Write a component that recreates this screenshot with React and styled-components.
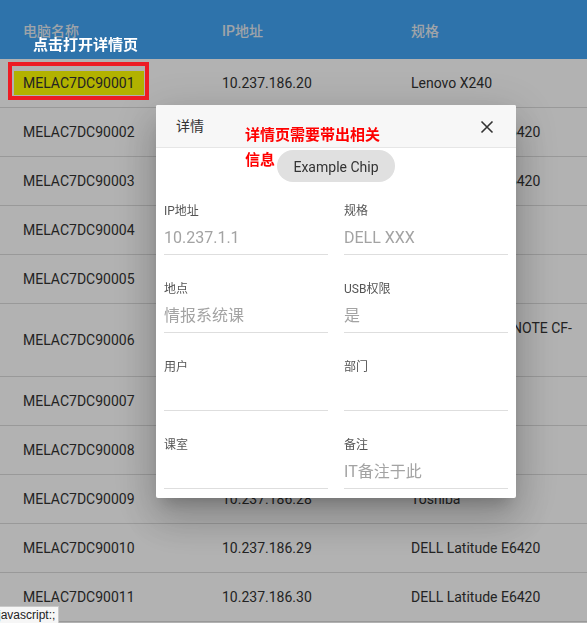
import React from "react";
import styled, { createGlobalStyle } from "styled-components";

const GlobalStyle = createGlobalStyle`
  html, body {
    margin: 0;
    padding: 0;
    background: #ffffff;
    overflow: hidden;
  }
  body {
    font-family: Roboto, "Noto Sans CJK SC", sans-serif;
    color: #333333;
  }
`;

const Page = styled.div`
  position: relative;
  width: 587px;
  height: 623px;
  overflow: hidden;
`;

const Table = styled.div`
  width: 100%;
  font-size: 14px;
`;

const HeadRow = styled.div`
  display: grid;
  grid-template-columns: 199px 189px 1fr;
  height: 59px;
  align-items: center;
  background: #42a5f5;
`;

const HeadCell = styled.div`
  padding: 0 0 0 23px;
  color: #e4ebf2;
  font-weight: 500;
  font-size: 14px;
`;

const Row = styled.div`
  display: grid;
  grid-template-columns: 199px 189px 1fr;
  align-items: center;
  border-bottom: 1px solid #dcdcdc;
  background: #ffffff;
`;

const Cell = styled.div`
  padding: 12px 0 12px 23px;
  line-height: 24px;
  color: #333333;
  white-space: ${(p) => (p.$multi ? "pre" : "nowrap")};
`;

const Marker = styled.span`
  background: #ffff00;
  padding: 4px 9px;
  margin-left: -9px;
`;

const Overlay = styled.div`
  position: fixed;
  inset: 0;
  background: rgba(0, 0, 0, 0.3);
`;

const Dialog = styled.div`
  position: fixed;
  left: 156px;
  top: 105px;
  width: 360px;
  background: #ffffff;
  border-radius: 2px;
  box-shadow: 0 11px 15px -7px rgba(0, 0, 0, 0.2),
    0 24px 38px 3px rgba(0, 0, 0, 0.14), 0 9px 46px 8px rgba(0, 0, 0, 0.12);
  overflow: hidden;
`;

const DialogHeader = styled.div`
  display: flex;
  align-items: center;
  justify-content: space-between;
  height: 42px;
  padding: 0 18px 0 20px;
  background: #f7f7f7;
  border-bottom: 1px solid #e6e6e6;
`;

const DialogTitle = styled.div`
  font-size: 14px;
  color: #333333;
  margin-top: -2px;
`;

const CloseButton = styled.button`
  display: flex;
  align-items: center;
  justify-content: center;
  width: 22px;
  height: 22px;
  padding: 0;
  border: none;
  background: transparent;
  color: #333333;
  margin-top: 1px;
`;

const DialogBody = styled.div`
  padding: 2px 8px 9px;
  display: flex;
  flex-direction: column;
  align-items: center;
`;

const Chip = styled.div`
  display: inline-flex;
  align-items: center;
  height: 32px;
  padding: 1px 16px 0;
  box-sizing: border-box;
  border-radius: 16px;
  background: #e0e0e0;
  color: #333333;
  font-size: 14px;
`;

const FieldGrid = styled.div`
  align-self: stretch;
  display: grid;
  grid-template-columns: 1fr 1fr;
  column-gap: 16px;
  row-gap: 25px;
  margin-top: 20px;
`;

const Field = styled.div`
  display: flex;
  flex-direction: column;
  padding-bottom: 4px;
  border-bottom: 1px solid #dedede;
`;

const FieldLabel = styled.div`
  font-size: 12px;
  line-height: 18px;
  color: #555555;
`;

const FieldValue = styled.div`
  margin-top: 6px;
  font-size: 16px;
  line-height: 24px;
  height: 24px;
  color: #a3a3a3;
`;

const NoteBox = styled.div`
  position: absolute;
  left: 8px;
  top: 62px;
  width: 141px;
  height: 38px;
  box-sizing: border-box;
  border: 4px solid #ed1c24;
`;

const NoteText = styled.div`
  position: absolute;
  left: ${(p) => p.$x}px;
  top: ${(p) => p.$y}px;
  color: ${(p) => p.$color};
  font-size: 15px;
  font-weight: 700;
  line-height: 25px;
  font-family: "Noto Sans CJK SC", sans-serif;
  white-space: pre;
`;

const StatusBar = styled.div`
  position: fixed;
  left: -5px;
  bottom: 0;
  height: 16px;
  padding: 0 3px;
  background: #f6f6f6;
  border: 1px solid #c9c9c9;
  border-bottom: none;
  border-left: none;
  font-family: "Liberation Sans", sans-serif;
  font-size: 12px;
  line-height: 17px;
  color: #222222;
`;

const rows = [
  ["MELAC7DC90001", "10.237.186.20", "Lenovo X240"],
  ["MELAC7DC90002", "10.237.186.21", "DELL Latitude E6420"],
  ["MELAC7DC90003", "10.237.186.22", "DELL Latitude E6420"],
  ["MELAC7DC90004", "10.237.186.23", "Lenovo X250"],
  ["MELAC7DC90005", "10.237.186.24", "Lenovo"],
  ["MELAC7DC90006", "10.237.186.25", "Panasonic Let's NOTE CF-\nSZ5"],
  ["MELAC7DC90007", "10.237.186.26", "Toshiba"],
  ["MELAC7DC90008", "10.237.186.27", "Lenovo X240"],
  ["MELAC7DC90009", "10.237.186.28", "Toshiba"],
  ["MELAC7DC90010", "10.237.186.29", "DELL Latitude E6420"],
  ["MELAC7DC90011", "10.237.186.30", "DELL Latitude E6420"],
];

const fields = [
  ["IP地址", "10.237.1.1"],
  ["规格", "DELL XXX"],
  ["地点", "情报系统课"],
  ["USB权限", "是"],
  ["用户", ""],
  ["部门", ""],
  ["课室", ""],
  ["备注", "IT备注于此"],
];

const CloseIcon = () => (
  <svg width="14" height="14" viewBox="0 0 14 14">
    <path
      d="M1.5 1.5 L12.5 12.5 M12.5 1.5 L1.5 12.5"
      stroke="currentColor"
      strokeWidth="1.6"
      fill="none"
    />
  </svg>
);

export default function App() {
  return (
    <Page>
      <GlobalStyle />
      <Table>
        <HeadRow>
          <HeadCell>电脑名称</HeadCell>
          <HeadCell>IP地址</HeadCell>
          <HeadCell>规格</HeadCell>
        </HeadRow>
        {rows.map(([name, ip, spec], i) => (
          <Row key={name}>
            <Cell>{i === 0 ? <Marker>{name}</Marker> : name}</Cell>
            <Cell>{ip}</Cell>
            <Cell $multi={spec.includes("\n")}>{spec}</Cell>
          </Row>
        ))}
      </Table>

      <Overlay />

      <Dialog>
        <DialogHeader>
          <DialogTitle>详情</DialogTitle>
          <CloseButton aria-label="close">
            <CloseIcon />
          </CloseButton>
        </DialogHeader>
        <DialogBody>
          <Chip>Example Chip</Chip>
          <FieldGrid>
            {fields.map(([label, value]) => (
              <Field key={label}>
                <FieldLabel>{label}</FieldLabel>
                <FieldValue>{value}</FieldValue>
              </Field>
            ))}
          </FieldGrid>
        </DialogBody>
      </Dialog>

      <NoteBox />
      <NoteText $x={33} $y={31} $color="#ffffff">
        点击打开详情页
      </NoteText>
      <NoteText $x={245} $y={121} $color="#ff0000">
        {"详情页需要带出相关\n信息"}
      </NoteText>

      <StatusBar>javascript:;</StatusBar>
    </Page>
  );
}
